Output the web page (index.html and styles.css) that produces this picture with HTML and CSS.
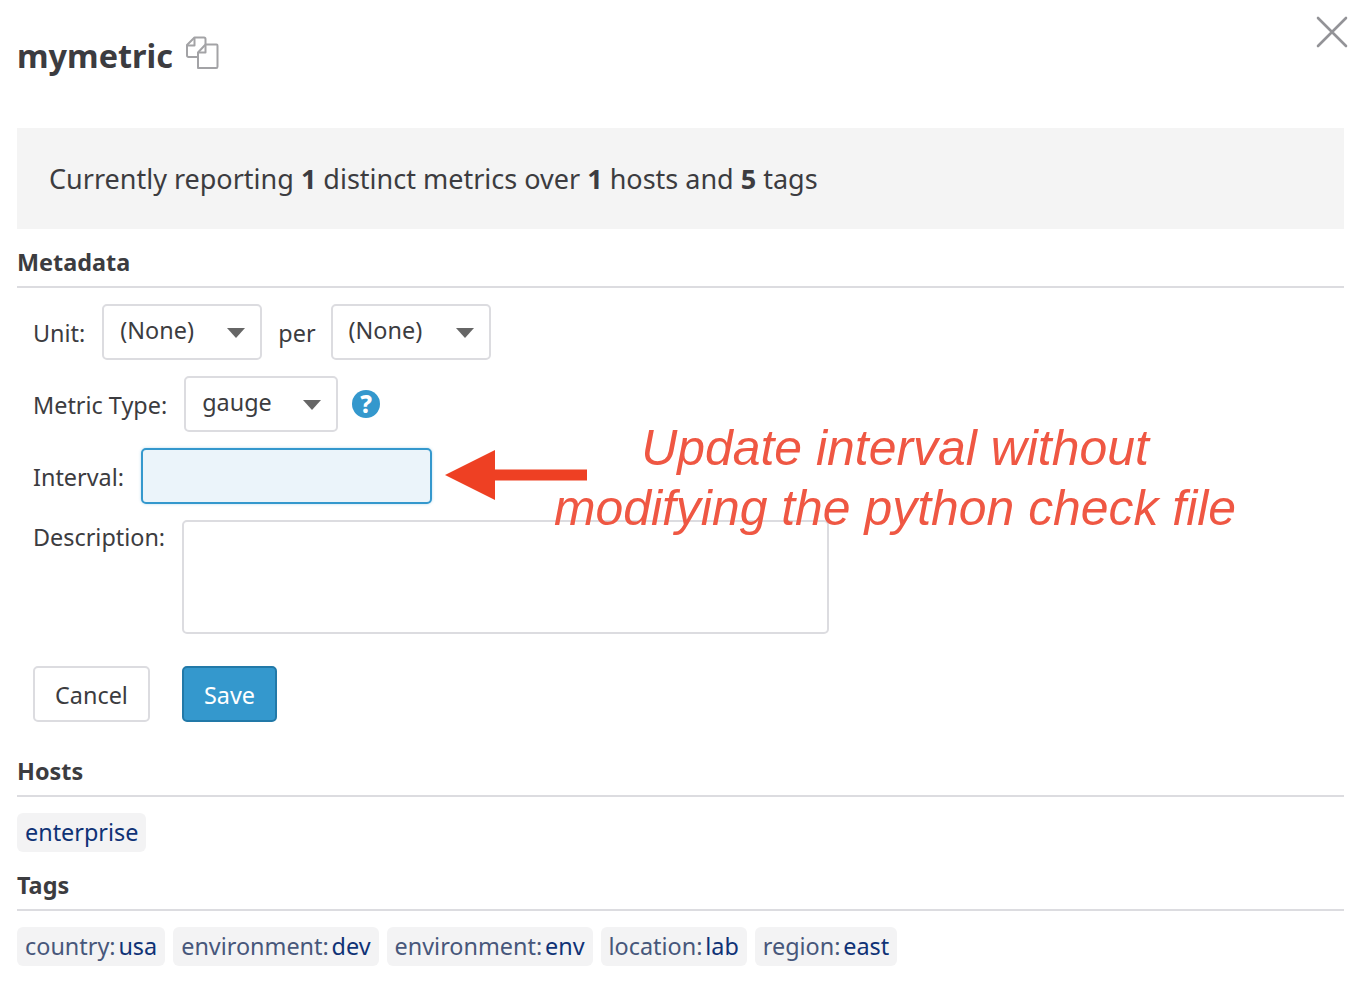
FILE: index.html
```html
<!DOCTYPE html>
<html lang="en">
<head>
<meta charset="utf-8">
<title>mymetric</title>
<link rel="stylesheet" href="styles.css">
</head>
<body>
<main class="dialog">
  <button class="close" aria-label="Close">
    <svg width="32" height="32" viewBox="0 0 32 32"><path d="M2 2L30 30M30 2L2 30" stroke="#939397" stroke-width="2.6" fill="none" stroke-linecap="round"/></svg>
  </button>
  <header class="title-row">
    <h1 class="title">mymetric</h1>
    <svg class="copy" width="34" height="34" viewBox="0 0 34 34" fill="none" stroke="#a3a3a6" stroke-width="2" stroke-linejoin="round">
      <path d="M13 22H3.500C2.700 22 2 21.300 2 20.500V10L9.500 2.500H19C20 2.500 20.500 3.200 20.500 4V9"/>
      <path d="M2 10.500H9.500V2.500"/>
      <path d="M13 33V17.500L20.500 9.500H31.500C32.200 9.500 32.500 10 32.500 10.700V31.500C32.500 32.400 32 33 31.200 33Z"/>
      <path d="M13 17.500H20.500V9.500"/>
    </svg>
  </header>
  <section class="summary">Currently reporting <b>1</b> distinct metrics over <b>1</b> hosts and <b>5</b> tags</section>
  <h2 class="heading heading-meta">Metadata</h2>
  <form class="form">
    <div class="row">
      <span class="label label-low">Unit:</span>
      <div class="select w160"><span>(None)</span><i class="caret"></i></div>
      <span class="label label-low label-per">per</span>
      <div class="select w160"><span>(None)</span><i class="caret"></i></div>
    </div>
    <div class="row">
      <span class="label label-low">Metric Type:</span>
      <div class="select w154"><span>gauge</span><i class="caret"></i></div>
      <span class="help">?</span>
    </div>
    <div class="row">
      <span class="label label-int">Interval:</span>
      <div class="input-focus"></div>
    </div>
    <div class="row row-top">
      <span class="label label-desc">Description:</span>
      <div class="textarea"></div>
    </div>
    <div class="actions">
      <button type="button" class="btn btn-cancel">Cancel</button>
      <button type="button" class="btn btn-save">Save</button>
    </div>
  </form>
  <h2 class="heading heading-hosts">Hosts</h2>
  <div class="tags"><span class="tag"><span class="val">enterprise</span></span></div>
  <h2 class="heading heading-tags">Tags</h2>
  <div class="tags">
    <span class="tag"><span class="key">country:</span><span class="val">usa</span></span>
    <span class="tag"><span class="key">environment:</span><span class="val">dev</span></span>
    <span class="tag"><span class="key">environment:</span><span class="val">env</span></span>
    <span class="tag"><span class="key">location:</span><span class="val">lab</span></span>
    <span class="tag"><span class="key">region:</span><span class="val">east</span></span>
  </div>
  <svg class="arrow" width="144" height="52" viewBox="0 0 144 52"><path d="M0 25L50 0V19.500H142V30.500H50V50Z" fill="#ee4023"/></svg>
  <p class="note">Update interval without<br>modifying the python check file</p>
</main>
</body>
</html>
```
FILE: styles.css
```css
* { box-sizing: border-box; }
html, body { margin: 0; padding: 0; background: #fff; }
body { font-family: "Noto Sans", sans-serif; color: #3c3c40; height: 988px; overflow: hidden; }
.dialog { position: relative; padding: 0 22px 0 17px; height: 988px; }
.close { position: absolute; left: 1316px; top: 16px; width: 32px; height: 32px; padding: 0; border: 0; background: none; line-height: 0; }
.title-row { display: flex; align-items: flex-start; height: 128px; padding-top: 29px; }
.title { margin: 0; font-size: 32.400px; line-height: 52px; font-weight: 700; height: 52px; }
.copy { margin: 6px 0 0 12px; }
.summary { background: #f4f4f4; height: 101px; padding: 30px 32px 0; font-size: 27px; line-height: 42px; }
.summary b { font-weight: 700; }
.heading { margin: 0; font-size: 23.400px; line-height: 33px; font-weight: 700; border-bottom: 2px solid #dcdce0; }
.heading-meta { height: 59px; padding-top: 17px; }
.heading-hosts { height: 65px; padding-top: 23px; margin-top: 10px; }
.heading-tags { height: 59px; padding-top: 17px; }
.form { padding: 16px 0 0 16px; }
.row { display: flex; align-items: center; height: 56px; margin-bottom: 16px; font-size: 23.400px; }
.row-top { align-items: flex-start; height: 114px; margin-bottom: 32px; }
.label { line-height: 34px; white-space: nowrap; margin-right: 1px; }
.label-per { margin-right: -1px; }
.label-low { margin-top: 2px; }
.label-int { margin-top: 2px; }
.label-desc { margin-top: 0; }
.select { height: 56px; border: 2px solid #dcdce0; border-radius: 5px; display: flex; align-items: center; justify-content: space-between; padding: 0 15px 0 16px; margin: 0 16px; background: #fff; font-size: 23.400px; }
.select span { margin-top: -5px; }
.w160 { width: 160px; }
.w154 { width: 154px; }
.caret { width: 0; height: 0; border-left: 9px solid transparent; border-right: 9px solid transparent; border-top: 10px solid #666; margin-top: 2px; }
.help { width: 28px; height: 28px; flex: none; margin-left: -2px; border-radius: 50%; background: #3498cd; color: #fff; font-weight: 800; font-size: 24px; line-height: 28px; text-align: center; }
.input-focus { width: 291px; height: 56px; margin-left: 16px; border: 2px solid #3498cd; border-radius: 5px; background: #ebf4fa; box-shadow: 0 0 3px rgba(52,152,205,.35); }
.textarea { width: 647px; height: 114px; margin-left: 16px; border: 2px solid #dcdce0; border-radius: 5px; background: #fff; }
.actions { display: flex; gap: 32px; height: 56px; }
.btn { height: 56px; border-radius: 5px; font-family: "Noto Sans", sans-serif; font-size: 23.400px; padding: 2px 0 0; }
.btn-cancel { width: 117px; border: 2px solid #dcdce0; background: #fff; color: #3c3c40; }
.btn-save { width: 95px; border: 2px solid #2279a8; background: #3498cd; color: #fff; }
.tags { display: flex; gap: 8px; margin-top: 16px; }
.tag { height: 39px; border-radius: 6px; background: #f3f3f4; padding: 0 8px; font-size: 23.400px; line-height: 38px; display: flex; gap: 2.800px; white-space: nowrap; }
.key { color: #47577b; }
.val { color: #0f3276; }
.arrow { position: absolute; left: 445px; top: 450px; }
.note { position: absolute; left: 553px; top: 418px; width: 684px; margin: 0; text-align: center; font-family: "Liberation Sans", Arial, sans-serif; font-style: italic; font-size: 49.900px; line-height: 60px; color: #ef5743; white-space: nowrap; }
```
